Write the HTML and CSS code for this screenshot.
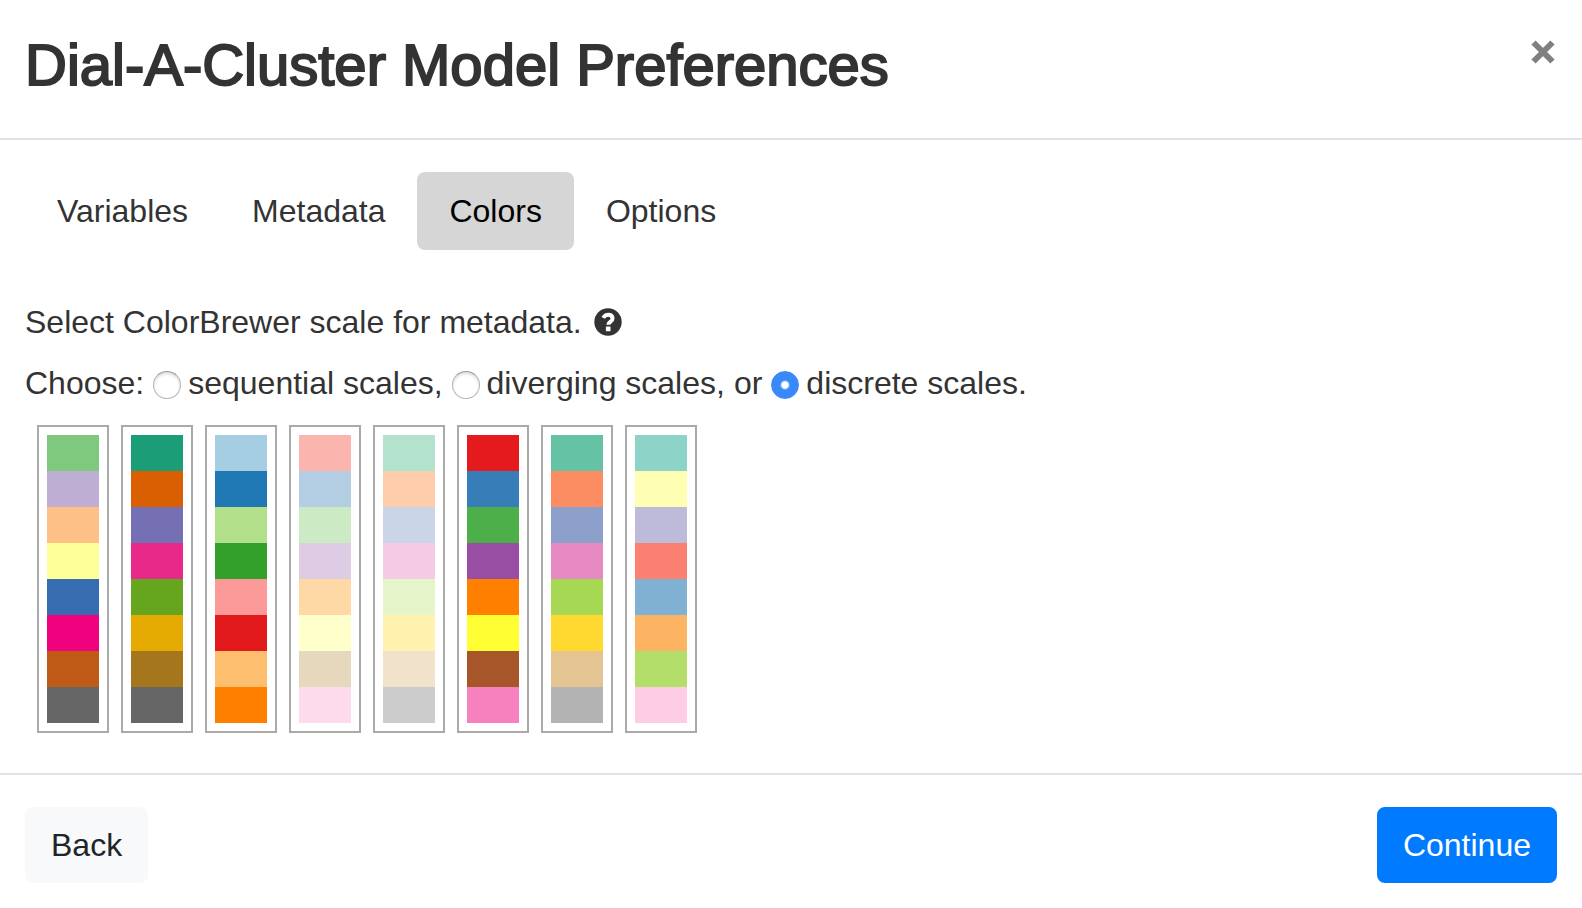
FILE: index.html
```
<!DOCTYPE html>
<html lang="en">
<head>
<meta charset="utf-8">
<meta name="viewport" content="width=device-width, initial-scale=1">
<title>Dial-A-Cluster Model Preferences</title>
<link rel="stylesheet" href="styles.css">
</head>
<body>
<div class="modal" role="dialog" aria-labelledby="modal-title">
  <header class="modal-header">
    <h1 class="modal-title" id="modal-title">Dial-A-Cluster Model Preferences</h1>
    <button class="close" type="button" aria-label="Close">
      <svg class="close-icon" viewBox="0 0 24 24" aria-hidden="true"><path d="M2.500 2.500 21.500 21.500M21.500 2.500 2.500 21.500"/></svg>
    </button>
  </header>

  <main class="modal-body">
    <nav class="tabs">
      <a class="tab" href="#variables">Variables</a>
      <a class="tab" href="#metadata">Metadata</a>
      <a class="tab tab-active" href="#colors" aria-current="page">Colors</a>
      <a class="tab" href="#options">Options</a>
    </nav>

    <div class="prompt">
      <span>Select ColorBrewer scale for metadata.</span>
      <button class="help" type="button" aria-label="Help">
        <svg class="help-icon" viewBox="0 0 28 28" aria-hidden="true">
          <circle cx="14" cy="14" r="13.700"/>
          <path class="help-hook" d="M9.200 9.900C10.300 7.900 12 6.700 14.200 6.700c2.700 0 4.300 1.500 4.300 3.700 0 3.700-4.200 3.300-4.200 6.300"/>
          <rect class="help-dot" x="11.900" y="18.600" width="4.600" height="4.600" rx=".5"/>
        </svg>
      </button>
    </div>

    <div class="choices" role="radiogroup" aria-label="Scale type">
      <span>Choose:</span>
      <label class="choice"><input class="radio" type="radio" name="scale-type"><span>sequential scales,</span></label>
      <label class="choice"><input class="radio" type="radio" name="scale-type"><span>diverging scales,</span></label>
      <span>or</span>
      <label class="choice"><input class="radio" type="radio" name="scale-type" checked><span>discrete scales.</span></label>
    </div>

    <div class="scales">
      <button class="scale accent" type="button" aria-label="Accent"><i></i><i></i><i></i><i></i><i></i><i></i><i></i><i></i></button>
      <button class="scale dark2" type="button" aria-label="Dark2"><i></i><i></i><i></i><i></i><i></i><i></i><i></i><i></i></button>
      <button class="scale paired" type="button" aria-label="Paired"><i></i><i></i><i></i><i></i><i></i><i></i><i></i><i></i></button>
      <button class="scale pastel1" type="button" aria-label="Pastel1"><i></i><i></i><i></i><i></i><i></i><i></i><i></i><i></i></button>
      <button class="scale pastel2" type="button" aria-label="Pastel2"><i></i><i></i><i></i><i></i><i></i><i></i><i></i><i></i></button>
      <button class="scale set1" type="button" aria-label="Set1"><i></i><i></i><i></i><i></i><i></i><i></i><i></i><i></i></button>
      <button class="scale set2" type="button" aria-label="Set2"><i></i><i></i><i></i><i></i><i></i><i></i><i></i><i></i></button>
      <button class="scale set3" type="button" aria-label="Set3"><i></i><i></i><i></i><i></i><i></i><i></i><i></i><i></i></button>
    </div>
  </main>

  <footer class="modal-footer">
    <button class="btn btn-light" type="button">Back</button>
    <button class="btn btn-primary" type="button">Continue</button>
  </footer>
</div>
</body>
</html>
```
FILE: styles.css
```
* {
  box-sizing: border-box;
}

body {
  margin: 0;
  background: #fff;
  color: #333;
  font-family: "Helvetica Neue", Helvetica, "Liberation Sans", Arial, sans-serif;
  font-size: 32px;
  line-height: 46px;
}

button {
  margin: 0;
  font: inherit;
  cursor: pointer;
}

.modal-header {
  display: flex;
  align-items: flex-start;
  justify-content: space-between;
  padding: 32px 25px 40px;
  border-bottom: 2px solid #dee2e6;
}

/* The stroke gives a medium weight, between regular and bold. */
.modal-title {
  margin: 0;
  font-size: 58px;
  font-weight: 400;
  line-height: 66px;
  -webkit-text-stroke: 2px #333;
}

.close {
  display: flex;
  padding: 8px 2px;
  border: 0;
  background: none;
}

.close-icon {
  width: 24px;
  height: 24px;
  fill: none;
  stroke: #808080;
  stroke-width: 6;
}

.modal-body {
  padding: 32px 25px 40px;
}

.tabs {
  display: flex;
  margin-bottom: 49px;
}

.tab {
  padding: 16px 32px;
  border-radius: 8px;
  color: #333;
  text-decoration: none;
}

.tab-active {
  background: #d6d6d6;
  color: #000;
}

.prompt,
.choices,
.choice {
  display: flex;
  align-items: center;
}

.prompt {
  gap: 12px;
  margin-bottom: 15px;
}

.help {
  display: flex;
  padding: 0;
  border: 0;
  background: none;
}

.help-icon {
  width: 28px;
  height: 28px;
  fill: #333;
}

.help-hook {
  fill: none;
  stroke: #fff;
  stroke-width: 4;
}

.help-dot {
  fill: #fff;
}

.choices {
  gap: 9px;
  margin-bottom: 19px;
}

.choice {
  gap: 7px;
}

.radio {
  appearance: none;
  width: 28px;
  height: 28px;
  margin: 4px 0 0;
  border: 1px solid #b4b4b4;
  border-top-color: #999;
  border-radius: 50%;
  background: #fff;
  box-shadow: inset 0 2px 3px #ddd;
}

.radio:checked {
  border-color: #3b88fd;
  background: radial-gradient(circle, #fff 3px, #3b88fd 5px);
  box-shadow: none;
}

.scales {
  display: flex;
  gap: 12px;
  padding-left: 12px;
}

.scale {
  display: flex;
  flex-direction: column;
  padding: 8px;
  border: 2px solid #aaa;
  background: #fff;
}

.scale i {
  width: 52px;
  height: 36px;
}

.scale i:nth-child(1) { background: var(--c1); }
.scale i:nth-child(2) { background: var(--c2); }
.scale i:nth-child(3) { background: var(--c3); }
.scale i:nth-child(4) { background: var(--c4); }
.scale i:nth-child(5) { background: var(--c5); }
.scale i:nth-child(6) { background: var(--c6); }
.scale i:nth-child(7) { background: var(--c7); }
.scale i:nth-child(8) { background: var(--c8); }

.accent { --c1: #7fc97f; --c2: #beaed4; --c3: #fdc086; --c4: #ffff99; --c5: #386cb0; --c6: #f0027f; --c7: #bf5b17; --c8: #666666; }
.dark2 { --c1: #1b9e77; --c2: #d95f02; --c3: #7570b3; --c4: #e7298a; --c5: #66a61e; --c6: #e6ab02; --c7: #a6761d; --c8: #666666; }
.paired { --c1: #a6cee3; --c2: #1f78b4; --c3: #b2df8a; --c4: #33a02c; --c5: #fb9a99; --c6: #e31a1c; --c7: #fdbf6f; --c8: #ff7f00; }
.pastel1 { --c1: #fbb4ae; --c2: #b3cde3; --c3: #ccebc5; --c4: #decbe4; --c5: #fed9a6; --c6: #ffffcc; --c7: #e5d8bd; --c8: #fddaec; }
.pastel2 { --c1: #b3e2cd; --c2: #fdcdac; --c3: #cbd5e8; --c4: #f4cae4; --c5: #e6f5c9; --c6: #fff2ae; --c7: #f1e2cc; --c8: #cccccc; }
.set1 { --c1: #e41a1c; --c2: #377eb8; --c3: #4daf4a; --c4: #984ea3; --c5: #ff7f00; --c6: #ffff33; --c7: #a65628; --c8: #f781bf; }
.set2 { --c1: #66c2a5; --c2: #fc8d62; --c3: #8da0cb; --c4: #e78ac3; --c5: #a6d854; --c6: #ffd92f; --c7: #e5c494; --c8: #b3b3b3; }
.set3 { --c1: #8dd3c7; --c2: #ffffb3; --c3: #bebada; --c4: #fb8072; --c5: #80b1d3; --c6: #fdb462; --c7: #b3de69; --c8: #fccde5; }

.modal-footer {
  display: flex;
  justify-content: space-between;
  padding: 32px 25px;
  border-top: 2px solid #dee2e6;
}

.btn {
  padding: 13px 24px;
  border: 2px solid;
  border-radius: 8px;
}

.btn-light {
  border-color: #f8f9fa;
  background: #f8f9fa;
  color: #212529;
}

.btn-primary {
  border-color: #007bff;
  background: #007bff;
  color: #fff;
}
```
